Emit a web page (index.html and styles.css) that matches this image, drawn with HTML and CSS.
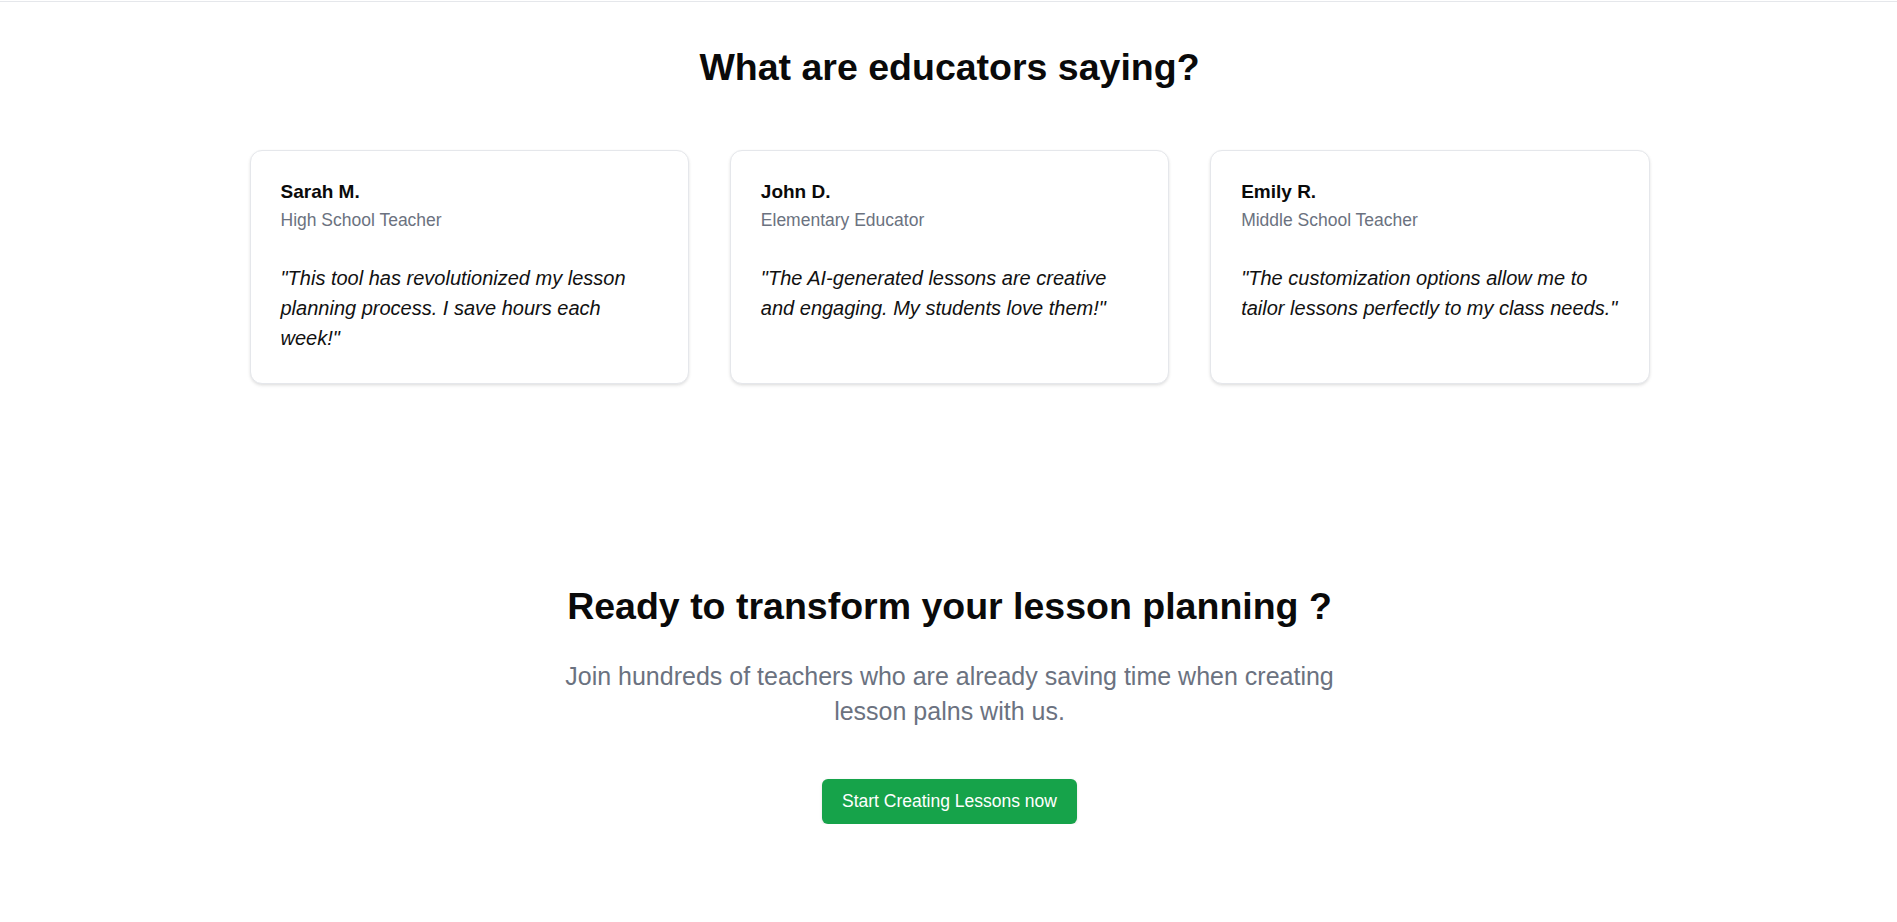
FILE: index.html
```html
<!DOCTYPE html>
<html lang="en">
<head>
<meta charset="utf-8">
<title>Testimonials</title>
<link rel="stylesheet" href="styles.css">
</head>
<body>
<div class="topline"></div>
<main class="page">
<section class="testimonials">
  <h2 class="section-title">What are educators saying?</h2>
  <div class="cards">
    <article class="card">
      <h3 class="name">Sarah M.</h3>
      <p class="role">High School Teacher</p>
      <p class="quote">"This tool has revolutionized my lesson planning process. I save hours each week!"</p>
    </article>
    <article class="card">
      <h3 class="name">John D.</h3>
      <p class="role">Elementary Educator</p>
      <p class="quote">"The AI-generated lessons are creative and engaging. My students love them!"</p>
    </article>
    <article class="card">
      <h3 class="name">Emily R.</h3>
      <p class="role">Middle School Teacher</p>
      <p class="quote">"The customization options allow me to tailor lessons perfectly to my class needs."</p>
    </article>
  </div>
</section>
<section class="cta">
  <h2 class="section-title">Ready to transform your lesson planning ?</h2>
  <p class="cta-text">Join hundreds of teachers who are already saving time when creating lesson palns with us.</p>
  <a class="cta-button" href="#">Start Creating Lessons now</a>
</section>
</main>
</body>
</html>
```
FILE: styles.css
```css
* { box-sizing: border-box; }
html, body { margin: 0; padding: 0; background: #ffffff; }
body {
  font-family: "Liberation Sans", Arial, Helvetica, sans-serif;
  color: #111111;
}
.topline {
  height: 2px;
  border-bottom: 1px solid #e5e7eb;
}
.page {
  padding-left: 2px;
}
.testimonials {
  max-width: 1400px;
  margin: 0 auto;
  padding-top: 43px;
  display: flex;
  flex-direction: column;
  align-items: stretch;
}
.section-title {
  margin: 0;
  font-size: 37.5px;
  line-height: 45px;
  font-weight: 700;
  color: #0a0a0a;
  text-align: center;
}
.testimonials .section-title { margin-bottom: 60px; }
.cards {
  display: grid;
  grid-template-columns: repeat(3, 1fr);
  gap: 41px;
}
.card {
  border: 1px solid #e5e7eb;
  border-radius: 12px;
  padding: 30px 30px 30px 30px;
  background: #fff;
  box-shadow: 0 2px 4px -1px rgba(0,0,0,0.10), 0 1px 3px rgba(0,0,0,0.06);
}
.name {
  margin: 0 0 5px;
  font-size: 19px;
  line-height: 22px;
  font-weight: 700;
  color: #0a0a0a;
}
.role {
  margin: 0;
  font-size: 17.5px;
  line-height: 24px;
  color: #6b7280;
}
.quote {
  margin: 31px 0 0;
  font-size: 20px;
  line-height: 30px;
  font-style: italic;
  color: #111111;
}
.cta {
  padding-top: 200px;
  display: flex;
  flex-direction: column;
  align-items: center;
}
.cta-text {
  margin: 30px 0 0;
  max-width: 790px;
  font-size: 25px;
  line-height: 35px;
  color: #6b7280;
  text-align: center;
}
.cta-button {
  margin-top: 50px;
  display: inline-block;
  padding: 10px 20px 11px;
  font-size: 17.5px;
  line-height: 24px;
  color: #ffffff;
  background: #16a34a;
  border-radius: 6px;
  text-decoration: none;
  box-shadow: 0 1px 3px rgba(0,0,0,0.12);
}
```
